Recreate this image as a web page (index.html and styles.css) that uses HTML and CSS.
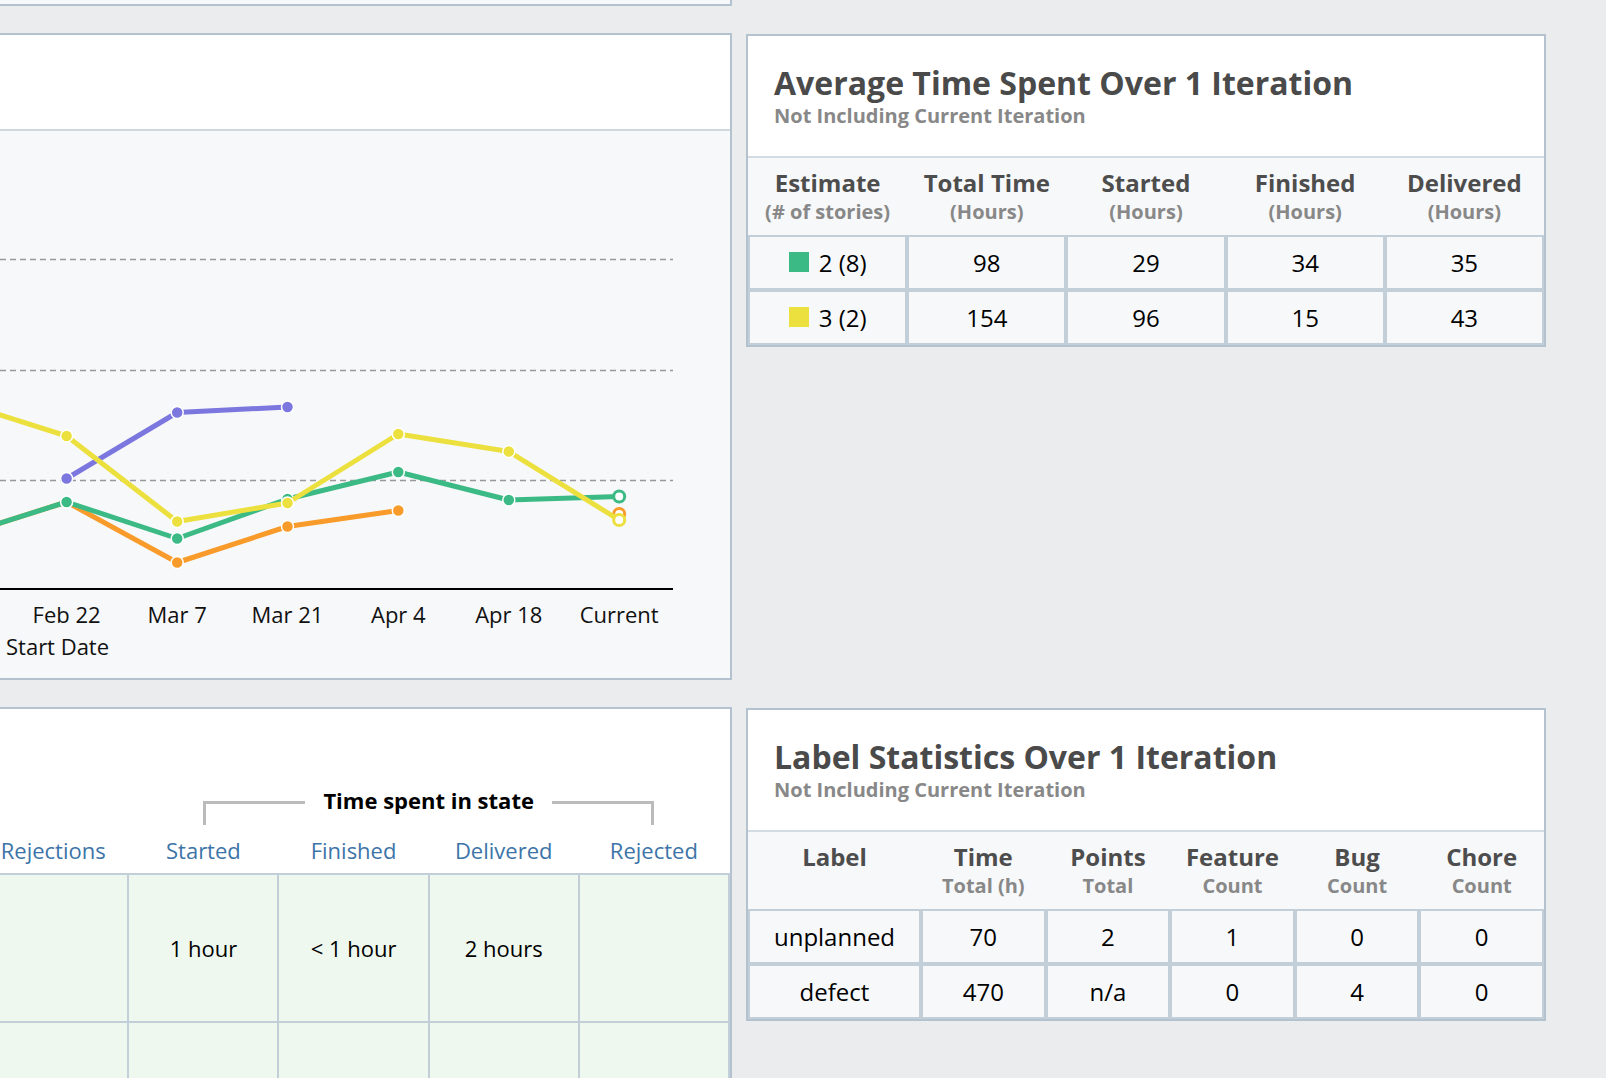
FILE: index.html
```html
<!DOCTYPE html>
<html lang="en">
<head>
<meta charset="utf-8">
<title>Iteration analytics</title>
<link rel="stylesheet" href="styles.css">
</head>
<body>
<div class="page">
  <div class="panel stub"></div>
  <div class="empty"></div>

  <section class="panel chart-panel">
    <div class="chart-head"></div>
    <div class="chart-body">
      <svg class="chart" width="900" height="547" viewBox="-170 131 900 547" xmlns="http://www.w3.org/2000/svg">
        <line class="grid-line" x1="-170" x2="673" y1="259.5" y2="259.5"/>
        <line class="grid-line" x1="-170" x2="673" y1="370.5" y2="370.5"/>
        <line class="grid-line" x1="-170" x2="673" y1="480.5" y2="480.5"/>
        <line class="axis-line" x1="-170" x2="673" y1="589" y2="589"/>

        <polyline class="series orange" points="-43.9,537 66.6,502 177.2,562.5 287.5,526.5 398.3,510.5"/>
        <circle class="pt orange-pt" cx="177.2" cy="562.5" r="6"/>
        <circle class="pt orange-pt" cx="287.5" cy="526.5" r="6"/>
        <circle class="pt orange-pt" cx="398.3" cy="510.5" r="6"/>
        <circle class="hollow orange-ring" cx="619.2" cy="514" r="5.5"/>

        <polyline class="series green" points="-154.4,560 -43.9,537 66.6,502 177.2,538.5 287.5,499 398.3,472 508.8,500 619.2,496.5"/>
        <circle class="pt green-pt" cx="66.6" cy="502" r="6"/>
        <circle class="pt green-pt" cx="177.2" cy="538.5" r="6"/>
        <circle class="pt green-pt" cx="287.5" cy="499" r="6"/>
        <circle class="pt green-pt" cx="398.3" cy="472" r="6"/>
        <circle class="pt green-pt" cx="508.8" cy="500" r="6"/>
        <circle class="hollow green-ring" cx="619.2" cy="496.5" r="5.5"/>

        <polyline class="series purple" points="66.6,478.5 177.2,412.5 287.5,407"/>
        <circle class="pt purple-pt" cx="66.6" cy="478.5" r="6"/>
        <circle class="pt purple-pt" cx="177.2" cy="412.5" r="6"/>
        <circle class="pt purple-pt" cx="287.5" cy="407" r="6"/>

        <polyline class="series yellow" points="-154.4,380 -43.9,401 66.6,436 177.2,521.5 287.5,503 398.3,434 508.8,451.5 619.2,520"/>
        <circle class="pt yellow-pt" cx="66.6" cy="436" r="6"/>
        <circle class="pt yellow-pt" cx="177.2" cy="521.5" r="6"/>
        <circle class="pt yellow-pt" cx="287.5" cy="503" r="6"/>
        <circle class="pt yellow-pt" cx="398.3" cy="434" r="6"/>
        <circle class="pt yellow-pt" cx="508.8" cy="451.5" r="6"/>
        <circle class="hollow yellow-ring" cx="619.2" cy="520" r="5.5"/>

        <text class="tick" x="66.6" y="623">Feb 22</text>
        <text class="tick" x="177.2" y="623">Mar 7</text>
        <text class="tick" x="287.5" y="623">Mar 21</text>
        <text class="tick" x="398.3" y="623">Apr 4</text>
        <text class="tick" x="508.8" y="623">Apr 18</text>
        <text class="tick" x="619.2" y="623">Current</text>
        <text class="axis-title" x="6" y="655">Start Date</text>
      </svg>
    </div>
  </section>

  <section class="panel stats first-stats">
    <header class="stats-head">
      <h2>Average Time Spent Over 1 Iteration</h2>
      <p>Not Including Current Iteration</p>
    </header>
    <table class="stats-table">
      <thead>
        <tr>
          <th><span class="th-main">Estimate</span><span class="th-sub">(# of stories)</span></th>
          <th><span class="th-main">Total Time</span><span class="th-sub">(Hours)</span></th>
          <th><span class="th-main">Started</span><span class="th-sub">(Hours)</span></th>
          <th><span class="th-main">Finished</span><span class="th-sub">(Hours)</span></th>
          <th><span class="th-main">Delivered</span><span class="th-sub">(Hours)</span></th>
        </tr>
      </thead>
      <tbody>
        <tr><td><span class="swatch sw-green"></span>2 (8)</td><td>98</td><td>29</td><td>34</td><td>35</td></tr>
        <tr><td><span class="swatch sw-yellow"></span>3 (2)</td><td>154</td><td>96</td><td>15</td><td>43</td></tr>
      </tbody>
    </table>
  </section>

  <section class="panel cycle-panel">
    <table class="cycle-table">
      <thead>
        <tr class="group-row">
          <th></th><th></th>
          <th colspan="4">
            <div class="bracket">
              <span class="bracket-arm left-arm"></span>
              <span class="bracket-label">Time spent in state</span>
              <span class="bracket-arm right-arm"></span>
            </div>
          </th>
        </tr>
        <tr class="col-row">
          <th></th><th>Rejections</th><th>Started</th><th>Finished</th><th>Delivered</th><th>Rejected</th>
        </tr>
      </thead>
      <tbody>
        <tr><td></td><td></td><td>1 hour</td><td>&lt; 1 hour</td><td>2 hours</td><td></td></tr>
        <tr><td></td><td></td><td></td><td></td><td></td><td></td></tr>
      </tbody>
    </table>
  </section>

  <section class="panel stats label-stats">
    <header class="stats-head">
      <h2>Label Statistics Over 1 Iteration</h2>
      <p>Not Including Current Iteration</p>
    </header>
    <table class="stats-table label-table">
      <colgroup><col class="label-col"><col><col><col><col><col></colgroup>
      <thead>
        <tr>
          <th><span class="th-main">Label</span><span class="th-sub">&nbsp;</span></th>
          <th><span class="th-main">Time</span><span class="th-sub">Total (h)</span></th>
          <th><span class="th-main">Points</span><span class="th-sub">Total</span></th>
          <th><span class="th-main">Feature</span><span class="th-sub">Count</span></th>
          <th><span class="th-main">Bug</span><span class="th-sub">Count</span></th>
          <th><span class="th-main">Chore</span><span class="th-sub">Count</span></th>
        </tr>
      </thead>
      <tbody>
        <tr><td>unplanned</td><td>70</td><td>2</td><td>1</td><td>0</td><td>0</td></tr>
        <tr><td>defect</td><td>470</td><td>n/a</td><td>0</td><td>4</td><td>0</td></tr>
      </tbody>
    </table>
  </section>
</div>
</body>
</html>
```

FILE: styles.css
```css
* { box-sizing: border-box; }

html, body {
  margin: 0;
  padding: 0;
  background: #ebecee;
  overflow: hidden;
}

body {
  font-family: "Open Sans", "Noto Sans", sans-serif;
  color: #000;
}

.page {
  display: grid;
  grid-template-columns: 904px 800px;
  column-gap: 14px;
  row-gap: 27px;
  align-items: start;
  margin-left: -172px;
}

.panel {
  border: 2px solid #b3c2ce;
  background: #fff;
}

.stub {
  height: 6px;
  border-top: none;
  background: #f7f8fa;
}

/* chart */
.chart-panel {
  height: 647px;
  display: flex;
  flex-direction: column;
}

.chart-head {
  height: 96px;
  flex: none;
  background: #fff;
  border-bottom: 2px solid #cfd8df;
}

.chart-body {
  height: 547px;
  flex: none;
  background: #f7f8fa;
}

.chart { display: block; }

.grid-line {
  stroke: #999;
  stroke-width: 1.5;
  stroke-dasharray: 6 4;
}

.axis-line {
  stroke: #000;
  stroke-width: 2;
}

.series {
  fill: none;
  stroke-width: 5;
  stroke-linejoin: round;
  stroke-linecap: round;
}

.series.green { stroke: #3cba85; }
.series.yellow { stroke: #ece03e; }
.series.purple { stroke: #7b77df; }
.series.orange { stroke: #f89b2a; }

.pt { stroke: #fff; stroke-width: 1.5; }
.green-pt { fill: #3cba85; }
.yellow-pt { fill: #ece03e; }
.purple-pt { fill: #7b77df; }
.orange-pt { fill: #f89b2a; }

.hollow { fill: #fff; stroke-width: 3; }
.green-ring { stroke: #3cba85; }
.yellow-ring { stroke: #ece03e; }
.orange-ring { stroke: #f89b2a; }

.tick, .axis-title {
  font-family: "Open Sans", "Noto Sans", sans-serif;
  font-size: 22px;
  fill: #111;
}

.tick { text-anchor: middle; }

/* stats panels */
.first-stats { margin-top: 1px; }
.label-stats { margin-top: 1px; }

.stats-head {
  padding: 28.5px 26px 0;
  border-bottom: 2px solid #d3dce2;
  height: 122px;
}

.stats-head h2 {
  margin: 0;
  font-size: 32px;
  line-height: 36px;
  font-weight: 700;
  color: #4a4a4a;
}

.stats-head p {
  margin: 4.5px 0 0;
  font-size: 20px;
  line-height: 22px;
  font-weight: 700;
  color: #888;
}

.stats-table {
  width: 100%;
  table-layout: fixed;
  border-collapse: separate;
  border-spacing: 0;
  background: #f7f8fa;
}

.stats-table th {
  padding: 10px 0 9px;
  text-align: center;
  font-weight: 700;
}

.th-main {
  display: block;
  font-size: 24px;
  line-height: 30px;
  color: #4d4d4d;
}

.th-sub {
  display: block;
  font-size: 20px;
  line-height: 28px;
  color: #888;
}

.stats-table td {
  border: 2px solid #c3cfd8;
  height: 55px;
  padding: 0;
  text-align: center;
  vertical-align: middle;
  font-size: 24px;
  line-height: 51px;
  color: #000;
}

.label-col { width: 173px; }

.swatch {
  display: inline-block;
  width: 20px;
  height: 20px;
  margin-right: 10px;
}

.sw-green { background: #3cba85; }
.sw-yellow { background: #ece03e; }

/* cycle table */
.cycle-panel {
  border-left: none;
}

.cycle-table {
  width: 902px;
  table-layout: fixed;
  border-collapse: collapse;
}

.group-row th {
  padding: 80px 0 0;
  vertical-align: top;
}

.bracket {
  display: flex;
  align-items: flex-start;
  margin: 0 75px;
}

.bracket-arm {
  flex: 1;
  height: 24px;
  margin-top: 12px;
  border-top: 3px solid #bbb;
}

.left-arm { border-left: 3px solid #bbb; }
.right-arm { border-right: 3px solid #bbb; }

.bracket-label {
  padding: 0 18px;
  font-size: 22px;
  line-height: 22px;
  font-weight: 700;
  color: #000;
  white-space: nowrap;
}

.col-row th {
  padding: 10px 0 8px;
  font-size: 22px;
  line-height: 30px;
  font-weight: 400;
  color: #3d74a8;
  text-align: center;
  border-bottom: 2px solid #c3cfd8;
}

.cycle-table td {
  height: 148px;
  padding: 0;
  background: #eff8ee;
  border-right: 2px solid #c3cfd8;
  border-bottom: 2px solid #c3cfd8;
  text-align: center;
  vertical-align: middle;
  font-size: 22px;
  line-height: 30px;
  color: #000;
}
```
